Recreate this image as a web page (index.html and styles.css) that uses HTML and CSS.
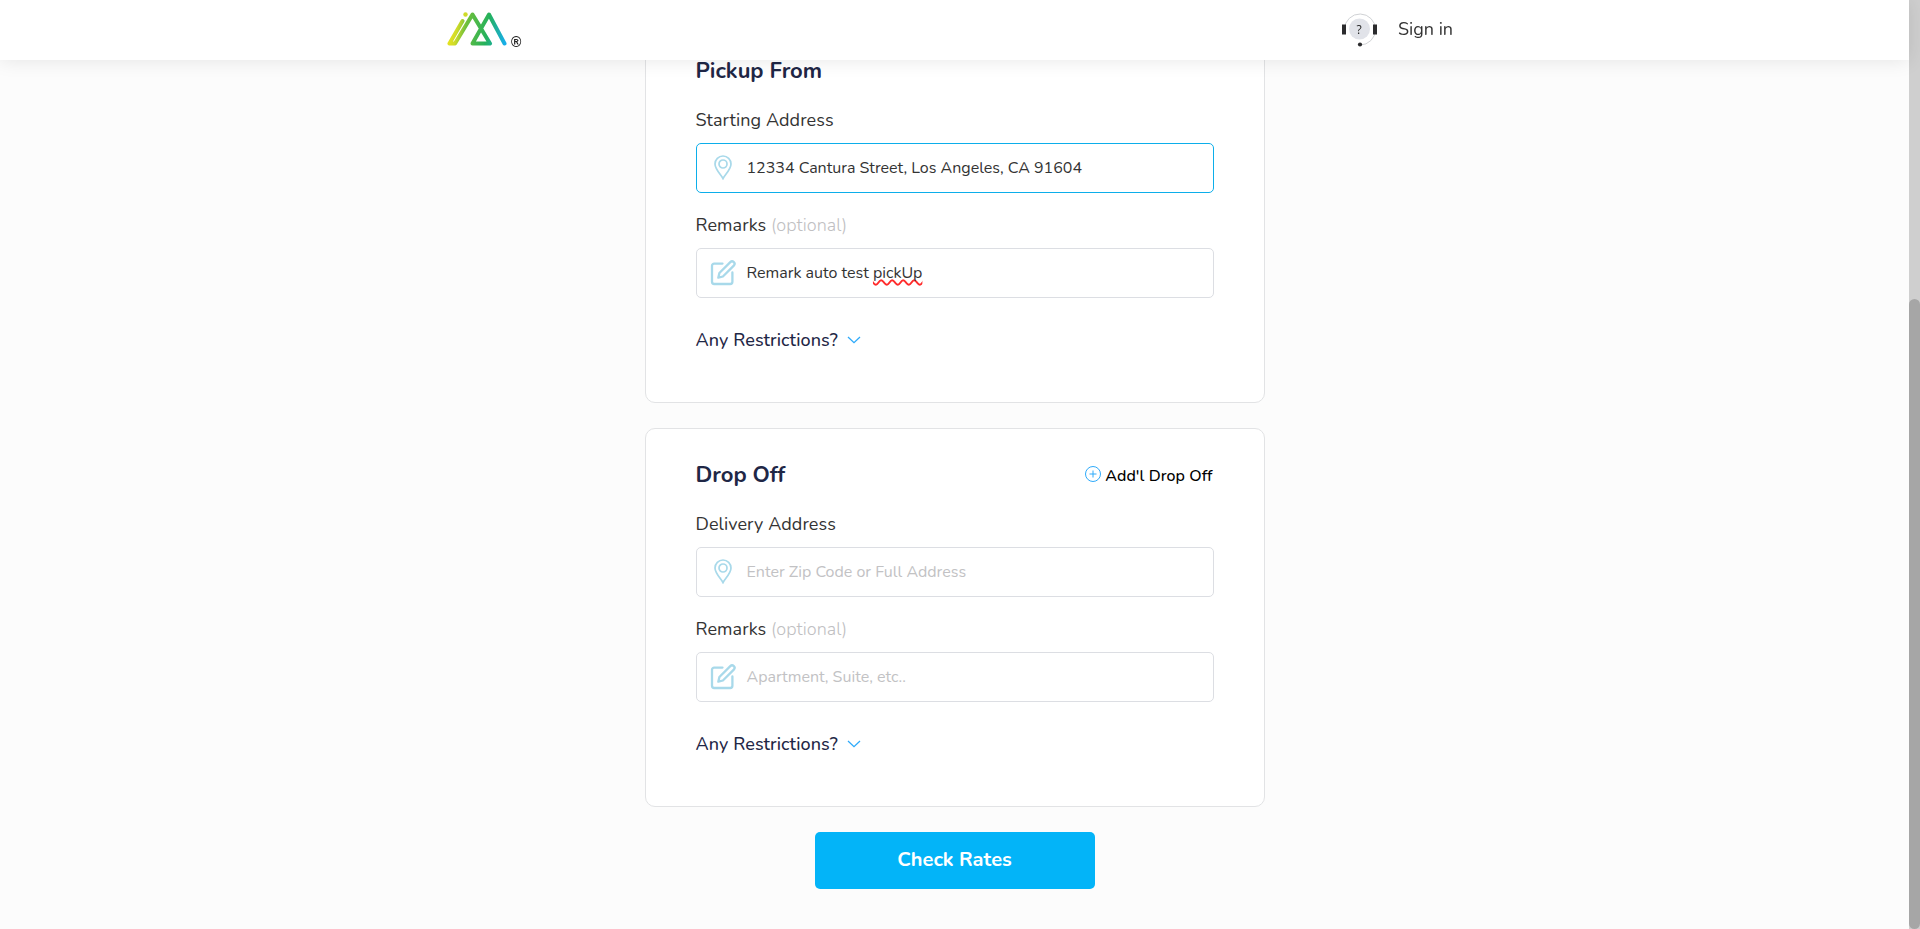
FILE: index.html
```html
<!DOCTYPE html>
<html lang="en">
<head>
<meta charset="utf-8">
<title>Check Rates</title>
<link rel="stylesheet" href="styles.css">
</head>
<body>
<svg class="defs" aria-hidden="true">
  <symbol id="pin" viewBox="0 0 18 25"><path d="M9 23.6C7.400 20.200 1 14.400 1 9a8 8 0 0 1 16 0c0 5.400-6.400 11.200-8 14.600z"/><circle cx="9" cy="9" r="4"/></symbol>
  <symbol id="edit" viewBox="0 0 26 26"><path d="M12.500 3.600H4.200A2.200 2.200 0 0 0 2 5.800v16A2.200 2.200 0 0 0 4.200 24h16a2.200 2.200 0 0 0 2.200-2.200v-9.300M8.300 17.700l1.100-4.700L20.300 2.100a2.400 2.400 0 0 1 3.500 3.500L12.900 16.500z"/></symbol>
  <symbol id="chevron" viewBox="0 0 14 8"><path d="M1 1l6 5.700L13 1"/></symbol>
</svg>
<header class="topbar">
  <a class="logo" href="#">
    <svg width="60" height="34" viewBox="0 0 60 34">
      <defs><linearGradient id="brand" gradientUnits="userSpaceOnUse" x1="0" y1="12" x2="59" y2="22"><stop offset="0" stop-color="#f2e61c"/><stop offset=".18" stop-color="#cfdb28"/><stop offset=".32" stop-color="#6dbf3b"/><stop offset=".68" stop-color="#24b15c"/><stop offset="1" stop-color="#17aee8"/></linearGradient></defs>
      <g fill="none" stroke="url(#brand)" stroke-width="4" stroke-linecap="round" stroke-linejoin="round"><path d="M2.500 31.500L15.500 9M2.500 31.500h5.500L25.500 2.500L43 31.500H25.500L42 2.500L57.500 31.500"/></g>
      <circle cx="18.500" cy="2.500" r="2.200" fill="#cfdb28"/>
    </svg>
    <span class="reg">®</span>
  </a>
  <nav class="account">
    <svg class="support" width="36" height="36" viewBox="0 0 36 36">
      <path d="M2.500 17a15.500 15.500 0 1 1 15.500 16" fill="none" stroke="#d0d2d5"/>
      <circle cx="17.500" cy="17" r="10.500" fill="#e1e3e9"/>
      <path d="M0 12.500h4v10H0zM31 12.500h4v10h-4z" fill="#2b2b2d"/><circle cx="18" cy="32.500" r="2.100" fill="#2b2b2d"/>
      <text class="support-mark" x="17" y="21.500" text-anchor="middle">?</text>
    </svg>
    <a class="signin" href="#">Sign in</a>
  </nav>
</header>
<main class="page">
  <section class="card">
    <div class="card-head"><h2 class="title">Pickup From</h2></div>
    <div class="label">Starting Address</div>
    <div class="field active"><svg class="pin"><use href="#pin"/></svg><span class="value">12334 Cantura Street, Los Angeles, CA 91604</span></div>
    <div class="label">Remarks <span class="optional">(optional)</span></div>
    <div class="field"><svg class="edit"><use href="#edit"/></svg><span class="value">Remark auto test <span class="misspelt">pickUp</span></span></div>
    <div class="restrictions">Any Restrictions?<svg class="chevron"><use href="#chevron"/></svg></div>
  </section>
  <section class="card">
    <div class="card-head"><h2 class="title">Drop Off</h2>
      <a class="add" href="#"><svg class="plus" viewBox="0 0 16 16"><circle cx="8" cy="8" r="7.500"/><path d="M8 4.500v7M4.500 8h7"/></svg><span>Add'l Drop Off</span></a></div>
    <div class="label">Delivery Address</div>
    <div class="field"><svg class="pin"><use href="#pin"/></svg><span class="value hint">Enter Zip Code or Full Address</span></div>
    <div class="label">Remarks <span class="optional">(optional)</span></div>
    <div class="field"><svg class="edit"><use href="#edit"/></svg><span class="value hint">Apartment, Suite, etc..</span></div>
    <div class="restrictions">Any Restrictions?<svg class="chevron"><use href="#chevron"/></svg></div>
  </section>
  <button class="submit">Check Rates</button>
</main>
<div class="scrollbar"><div class="thumb"></div></div>
</body>
</html>
```

FILE: styles.css
```css
* { box-sizing: border-box; }
html, body { margin: 0; height: 929px; overflow: hidden; }
body { background: #fcfcfc; color: #333; font-family: Nunito, Lato, "Open Sans", sans-serif; }
a { color: inherit; text-decoration: none; }
.defs { position: absolute; width: 0; height: 0; }

.topbar { position: fixed; top: 0; left: 0; right: 11px; z-index: 2; height: 60px; padding: 0 455px 0 447px; display: flex; justify-content: space-between; background: #fff; box-shadow: 0 0 20px rgba(0, 0, 0, .1); }
.logo { display: flex; align-items: flex-start; gap: 4px; padding-top: 12px; }
.reg { font: bold 14px/14px "Liberation Sans", sans-serif; color: #222; margin-top: 23px; }
.account { display: flex; align-items: center; gap: 20px; }
.support-mark { font: 12px "Open Sans", sans-serif; fill: #222; }
.signin { font-size: 18px; line-height: 24px; width: 56px; white-space: nowrap; margin-top: -2px; }

.page { width: 1909px; padding-top: 24px; display: flex; flex-direction: column; align-items: center; gap: 25px; }
.card { width: 620px; height: 379px; padding: 31px 50px 0; background: #fff; border: 1px solid #e2e3e5; border-radius: 10px; }
.card-head { display: flex; justify-content: space-between; align-items: center; height: 30px; }
.title { margin: 0; font-size: 22px; line-height: 30px; font-weight: 700; color: #1f2746; }
.label { margin-top: 20px; font-size: 18px; line-height: 24px; letter-spacing: .07px; }
.card-head + .label { margin-top: 22px; }
.optional { color: #c0c0c2; font-weight: 300; }
.field { margin-top: 11px; height: 50px; border: 1px solid #dcdee3; border-radius: 5px; display: flex; align-items: center; padding-left: 13px; }
.field.active { border-color: #0caeea; }
.pin { width: 18px; height: 25px; margin: 0 15px 2px 4px; fill: none; stroke: #a8d9ea; stroke-width: 1.700; }
.edit { width: 26px; height: 26px; margin: 0 11px 1px 0; fill: none; stroke: #a8d9ea; stroke-width: 2.300; stroke-linejoin: round; stroke-linecap: round; }
.value { font-size: 16px; line-height: 24px; white-space: nowrap; }
.hint { color: #c2c2c4; }
.misspelt { text-decoration: underline wavy #ff2b2b 1.500px; text-underline-offset: 1px; text-decoration-skip-ink: none; }
.restrictions { margin-top: 30px; display: flex; align-items: center; gap: 9px; font-size: 18px; line-height: 24px; font-weight: 500; letter-spacing: .08px; color: #1f2746; }
.chevron { width: 14px; height: 8px; fill: none; stroke: #2eaafa; stroke-width: 1.300; }
.add { display: flex; align-items: center; gap: 4px; font-size: 16px; line-height: 24px; font-weight: 500; letter-spacing: .08px; color: #000; padding: 1px 1px 0 0; }
.plus { width: 16px; height: 16px; margin-top: -3px; fill: none; stroke: #2eaafa; }
.submit { width: 280px; height: 57px; border: 0; border-radius: 5px; background: #03b4f8; color: #fff; font: 700 20px/27px Nunito, Lato, sans-serif; padding: 0 0 3px; }

.scrollbar { position: fixed; top: 0; right: 0; width: 11px; height: 929px; padding-top: 299px; background: #cfcfcf; }
.thumb { height: 630px; border-radius: 6px; background: #a6a6a6; }
```
